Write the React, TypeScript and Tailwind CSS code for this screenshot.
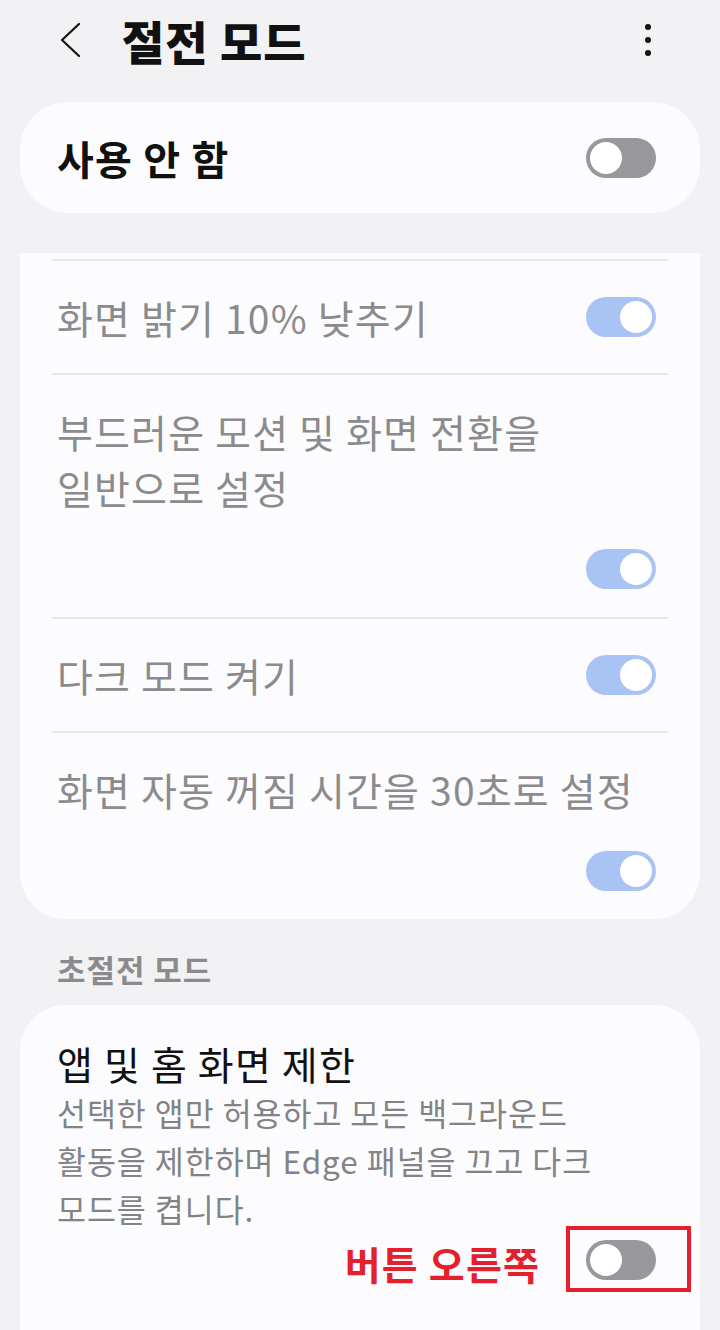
import React from "react";

const FONT = { fontFamily: '"Noto Sans CJK KR", "Noto Sans", sans-serif' };

function Toggle({ on }: { on: boolean }) {
  return (
    <div
      className={`flex h-[40px] w-[70px] items-center rounded-full px-[4px] ${
        on ? "justify-end bg-[#a9c3f5]" : "justify-start bg-[#98989c]"
      }`}
    >
      <div className="h-[32px] w-[32px] rounded-full bg-white" />
    </div>
  );
}

function Divider() {
  return <div className="h-[2px] bg-[#e7e7ea]" />;
}

type Item = { lines: string[]; stacked?: boolean };

const items: Item[] = [
  { lines: ["화면 밝기 10% 낮추기"] },
  { lines: ["부드러운 모션 및 화면 전환을", "일반으로 설정"], stacked: true },
  { lines: ["다크 모드 켜기"] },
  { lines: ["화면 자동 꺼짐 시간을 30초로 설정"], stacked: true },
];

function SettingRow({ item }: { item: Item }) {
  if (item.stacked) {
    return (
      <div className="flex flex-col pl-[5px] pr-[12px] pt-[28px] pb-[28px]">
        {item.lines.map((line) => (
          <div key={line} className="text-[39px] leading-[56px] tracking-[0.03em] text-[#8b8b8d]">
            {line}
          </div>
        ))}
        <div className="mt-[34px] flex justify-end">
          <Toggle on />
        </div>
      </div>
    );
  }
  return (
    <div className="flex items-center justify-between pl-[5px] pr-[12px] py-[28px]">
      <div className="text-[39px] leading-[56px] tracking-[0.03em] text-[#8b8b8d]">{item.lines[0]}</div>
      <Toggle on />
    </div>
  );
}

export default function App() {
  return (
    <div className="h-[1330px] w-[720px] overflow-hidden bg-[#f2f2f4]" style={FONT}>
      {/* header */}
      <header className="flex h-[80px] items-center pl-[58px] pr-[69px]">
        <svg width="24" height="38" viewBox="0 0 24 38" className="shrink-0">
          <path d="M21 3 L4 19 L21 35" fill="none" stroke="#111" strokeWidth="2.2" strokeLinecap="round" strokeLinejoin="round" />
        </svg>
        <h1 className="ml-[40px] text-[46px] font-extrabold leading-none tracking-[0.02em] text-[#111]">절전 모드</h1>
        <div className="ml-auto flex flex-col items-center gap-[7px]">
          <span className="h-[6px] w-[6px] rounded-full bg-[#111]" />
          <span className="h-[6px] w-[6px] rounded-full bg-[#111]" />
          <span className="h-[6px] w-[6px] rounded-full bg-[#111]" />
        </div>
      </header>

      {/* master switch */}
      <section className="mx-[20px] mt-[22px] flex h-[111px] items-center justify-between rounded-[48px] bg-[#fcfcfe] pl-[37px] pr-[44px]">
        <span className="text-[40px] font-bold tracking-[0.03em] text-[#111]">사용 안 함</span>
        <Toggle on={false} />
      </section>

      {/* options list (scrolled) */}
      <section className="mx-[20px] mt-[40px] rounded-b-[46px] bg-[#fcfcfe] px-[32px] pt-[6px]">
        {items.map((item, i) => (
          <div key={i}>
            <Divider />
            <SettingRow item={item} />
          </div>
        ))}
      </section>

      <div className="px-[57px] pt-[32px] pb-[18px] text-[31px] font-bold leading-[36px] tracking-[0.03em] text-[#8b8b8d]">
        초절전 모드
      </div>

      {/* ultra power saving */}
      <section className="mx-[20px] h-[400px] rounded-t-[46px] bg-[#fcfcfe] pl-[37px] pr-[44px] pt-[33px]">
        <div className="text-[39px] leading-[50px] tracking-[0.03em] text-[#111]">앱 및 홈 화면 제한</div>
        <div className="text-[31.5px] leading-[48px] tracking-[0.03em] text-[#838385]">
          <div>선택한 앱만 허용하고 모든 백그라운드</div>
          <div>활동을 제한하며 Edge 패널을 끄고 다크</div>
          <div>모드를 켭니다.</div>
        </div>
        <div className="mt-[4px] flex items-center justify-end">
          <span className="mr-[46px] mt-[8px] text-[39px] font-bold leading-none tracking-[0.03em] text-[#e3202b]">버튼 오른쪽</span>
          <div className="relative">
            <Toggle on={false} />
            <div className="absolute -left-[20px] -right-[35px] -top-[14px] -bottom-[12px] border-[4px] border-[#e3202b]" />
          </div>
        </div>
      </section>
    </div>
  );
}
